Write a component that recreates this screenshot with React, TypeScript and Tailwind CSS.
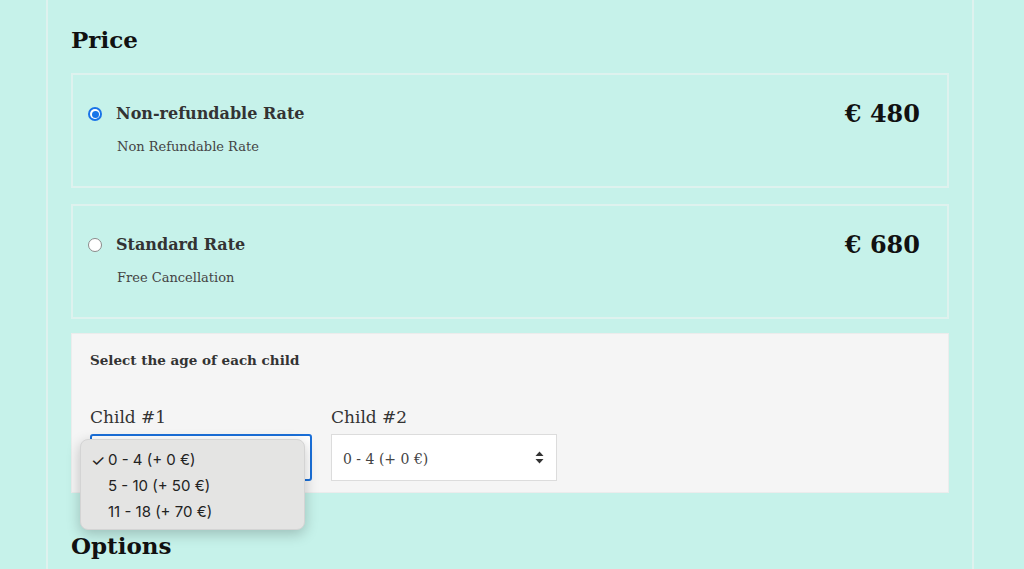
import React from 'react';

const serif = { fontFamily: '"DejaVu Serif", "Liberation Serif", serif' };

function Radio({ checked }: { checked: boolean }) {
  return checked ? (
    <span className="flex h-[14px] w-[14px] shrink-0 items-center justify-center rounded-full bg-[#1a73e8]">
      <span className="flex h-[10px] w-[10px] items-center justify-center rounded-full bg-white">
        <span className="h-[7px] w-[7px] rounded-full bg-[#1a73e8]" />
      </span>
    </span>
  ) : (
    <span className="h-[14px] w-[14px] shrink-0 rounded-full border border-[#8a8a8a] bg-white" />
  );
}

function RateCard({ title, note, price, checked }: { title: string; note: string; price: string; checked: boolean }) {
  return (
    <div className="flex h-[115px] items-start justify-between border-2 border-[#def2ee] pl-[15px] pr-[27px] pt-[26px]">
      <div>
        <div className="flex h-[26px] items-center gap-[14px]">
          <Radio checked={checked} />
          <span className="text-[16px] font-bold text-[#333]">{title}</span>
        </div>
        <p className="mt-[10px] pl-[29px] text-[13px] text-[#444]">{note}</p>
      </div>
      <span className="text-[24px] font-bold leading-[26px] text-[#111]">{price}</span>
    </div>
  );
}

export default function App() {
  const ages = ['0 - 4 (+ 0 €)', '5 - 10 (+ 50 €)', '11 - 18 (+ 70 €)'];

  return (
    <div className="h-[569px] w-full overflow-hidden bg-[#c6f2ea]" style={serif}>
      <div className="ml-[46px] mr-[50px] h-full border-x-2 border-[#def2ee] px-[23px]">
        <h2 className="pt-[25px] text-[23px] font-bold leading-[30px] text-[#111]">Price</h2>

        <div className="mt-[18px] flex flex-col gap-[16px]">
          <RateCard title="Non-refundable Rate" note="Non Refundable Rate" price="€ 480" checked />
          <RateCard title="Standard Rate" note="Free Cancellation" price="€ 680" checked={false} />
        </div>

        <div className="mt-[14px] h-[160px] border border-[#ececec] bg-[#f5f5f5] px-[18px] pt-[16px]">
          <p className="text-[13.5px] font-bold leading-[20px] text-[#333]">Select the age of each child</p>

          <div className="mt-[35px] flex gap-[19px]">
            <div className="relative w-[222px]">
              <label className="block text-[17px] leading-[24px] text-[#333]">Child #1</label>
              <div className="mt-[5px] h-[47px] rounded-[3px] border-2 border-[#1a6fd8] bg-white" />
              <ul
                className="absolute left-[-10px] top-[34px] z-10 w-[225px] rounded-[8px] border border-[#d4d4d4] bg-[#e4e4e3] pb-[4px] pt-[7px] text-[15px] text-[#222] shadow-[0_4px_14px_rgba(0,0,0,0.22)]"
                style={{ fontFamily: 'Inter, "Liberation Sans", sans-serif' }}
              >
                {ages.map((a, i) => (
                  <li key={a} className="flex h-[26px] items-center pl-[10px]">
                    <span className="w-[17px] text-[16px] leading-none">{i === 0 ? '✓' : ''}</span>
                    {a}
                  </li>
                ))}
              </ul>
            </div>

            <div className="w-[226px]">
              <label className="block text-[17px] leading-[24px] text-[#333]">Child #2</label>
              <div className="mt-[5px] flex h-[47px] items-center justify-between border border-[#dcdcdc] bg-white pl-[11px] pr-[12px] pt-[4px]">
                <span className="text-[14px] text-[#444]">0 - 4 (+ 0 €)</span>
                <svg width="9" height="13" viewBox="0 0 9 13" className="-mt-[4px]">
                  <path d="M4.5 0.5 L8.5 5 H0.5 Z" fill="#333" />
                  <path d="M4.5 12.5 L8.5 8 H0.5 Z" fill="#333" />
                </svg>
              </div>
            </div>
          </div>
        </div>

        <h2 className="mt-[38px] text-[23px] font-bold leading-[30px] text-[#111]">Options</h2>
      </div>
    </div>
  );
}
